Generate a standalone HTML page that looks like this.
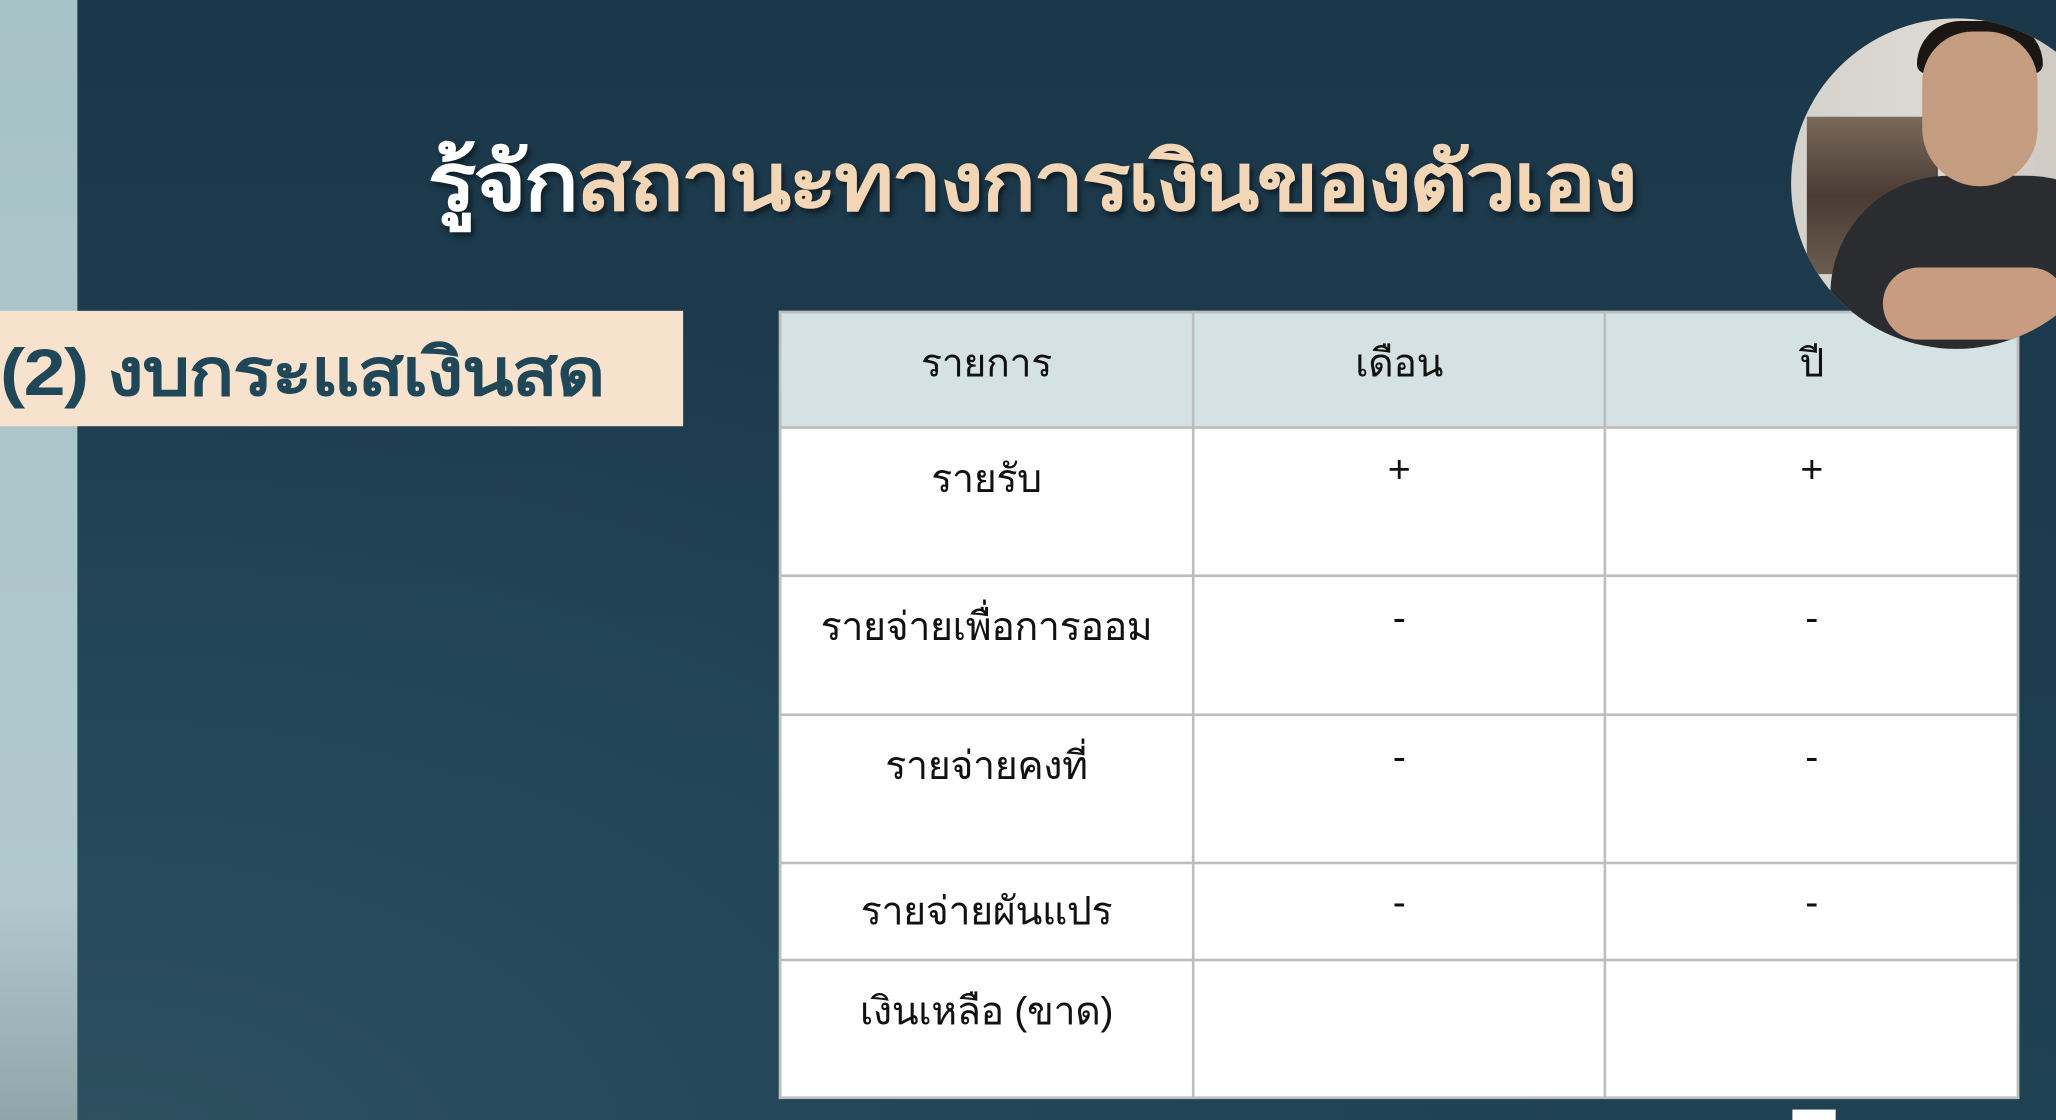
<!DOCTYPE html>
<html><head><meta charset="utf-8"><style>
html,body{margin:0;padding:0;width:2056px;height:1120px;overflow:hidden;background:#1c3a4b}
#s{position:absolute;left:0;top:0;width:1568px;height:854px;transform:scale(1.3112,1.3115);transform-origin:0 0;overflow:hidden;
background:radial-gradient(ellipse at 5% 105%,#2f5160 0%,#24485a 25%,rgba(0,0,0,0) 55%),linear-gradient(180deg,#1b384a 0%,#1d3d4f 60%,#1f4253 100%);
font-family:"Liberation Sans","Noto Sans CJK SC",sans-serif}
.strip{position:absolute;left:0;top:0;width:59px;height:854px;background:linear-gradient(180deg,#a7c2c7,#b1c9cd 80%,#8fa5aa)}
.title{position:absolute;left:326px;top:90px;font-size:62px;font-weight:bold;color:#f2d6b6;white-space:nowrap;letter-spacing:-2px;text-shadow:2px 3px 4px rgba(0,0,0,.5);transform:scaleX(1.12);transform-origin:0 0}
.title b{color:#fff}
.label{position:absolute;left:0;top:237px;width:521px;height:88px;background:#f6e2cd}
.label span{position:absolute;left:0;top:8px;font-size:50px;font-weight:bold;color:#1f4757;letter-spacing:-1px;white-space:nowrap;transform:scaleX(1.15);transform-origin:0 0}
table{position:absolute;left:594px;top:237px;width:946px;border-collapse:collapse;background:#fff}
td{border:2px solid #bdbdbd;width:315px;text-align:center;vertical-align:top;font-size:30px;color:#111;padding:15px 0 0;box-sizing:border-box;letter-spacing:-0.3px}
tr.h td{background:#d5e2e4;height:88px;padding-top:15px}
.cam{position:absolute;left:1366px;top:14px;width:252px;height:252px;border-radius:50%;overflow:hidden;
background:linear-gradient(90deg,#d4d2cc 0%,#dcd9d3 40%,#c9c4bc 100%)}
.shelf{position:absolute;left:12px;top:75px;width:100px;height:120px;background:linear-gradient(180deg,#7a6a5c,#4a3c33 50%,#6b5c50)}
.body{position:absolute;left:30px;top:120px;width:240px;height:170px;border-radius:90px 90px 0 0;background:#2a2c30}
.head{position:absolute;left:100px;top:10px;width:88px;height:118px;border-radius:44px 44px 50px 50px;background:#c49c80}
.hair{position:absolute;left:96px;top:2px;width:96px;height:40px;border-radius:48px 48px 10px 10px;background:#1a1614}
.hands{position:absolute;left:70px;top:190px;width:140px;height:55px;border-radius:28px;background:#c89c80}
.tb{position:absolute;left:1367px;top:846px;width:33px;height:8px;background:#fff}
</style></head><body><div id="s">
<div class="strip"></div>
<div class="title"><b>รู้จัก</b>สถานะทางการเงินของตัวเอง</div>
<div class="label"><span>(2) งบกระแสเงินสด</span></div>
<table>
<tr class="h"><td>รายการ</td><td>เดือน</td><td>ปี</td></tr>
<tr style="height:113px"><td>รายรับ</td><td>+</td><td>+</td></tr>
<tr style="height:106px"><td>รายจ่ายเพื่อการออม</td><td>-</td><td>-</td></tr>
<tr style="height:113px"><td>รายจ่ายคงที่</td><td>-</td><td>-</td></tr>
<tr style="height:74px"><td style="padding-top:13px">รายจ่ายผันแปร</td><td style="padding-top:13px">-</td><td style="padding-top:13px">-</td></tr>
<tr style="height:105px"><td>เงินเหลือ (ขาด)</td><td></td><td></td></tr>
</table>
<div class="cam"><div class="shelf"></div><div class="body"></div><div class="hair"></div><div class="head"></div><div class="hands"></div></div>
<div class="tb"></div>
</div></body></html>
